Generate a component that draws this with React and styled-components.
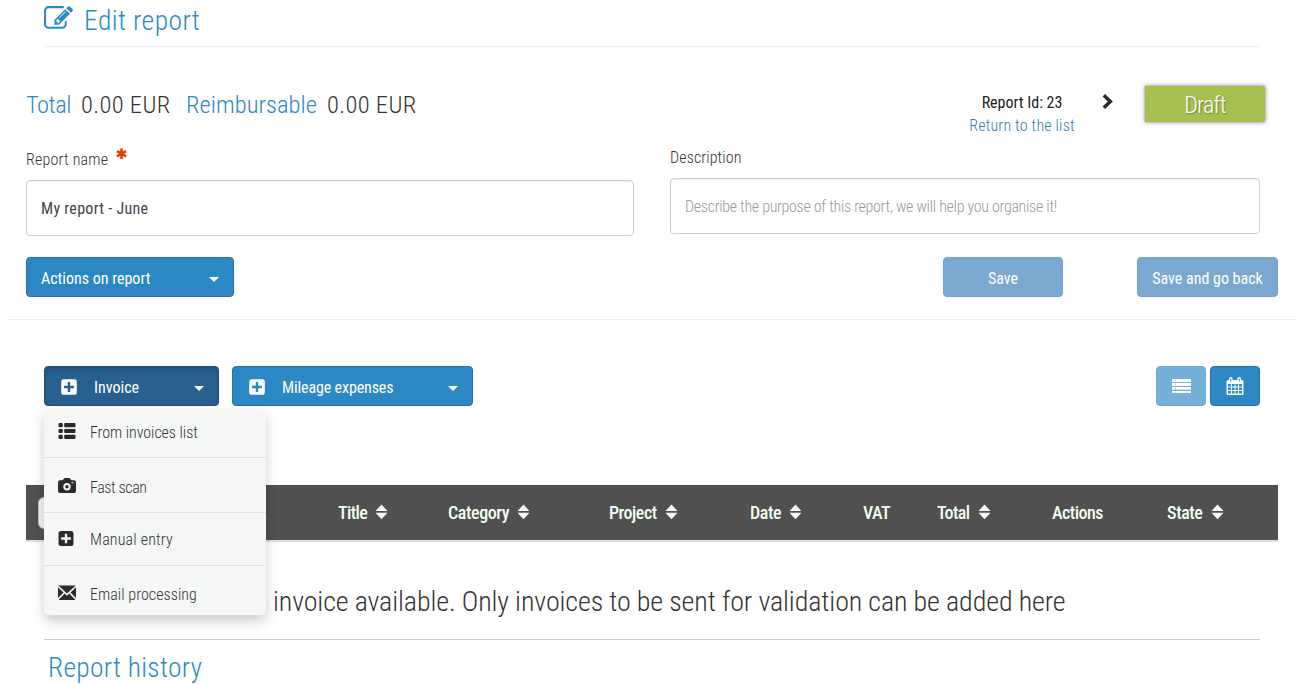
import React from 'react';
import styled, { createGlobalStyle, css } from 'styled-components';

const GlobalStyle = createGlobalStyle`
  * {
    box-sizing: border-box;
  }

  body {
    margin: 0;
    background: #fff;
    color: #333;
    font-family: Roboto, "Liberation Sans", sans-serif;
    font-stretch: 75%;
    font-weight: 300;
    font-size: 16px;
    overflow: hidden;
  }
`;

const Page = styled.div`
  width: 1299px;
  height: 684px;
  overflow: hidden;
`;

const PageHeader = styled.header`
  display: flex;
  align-items: flex-start;
  gap: 11px;
  height: 47px;
  margin: 0 39px 0 44px;
  padding-top: 5px;
  border-bottom: 1px solid #eee;
  color: #2b88c4;
`;

const Title = styled.h1`
  margin: 0;
  font-size: 27.5px;
  font-weight: 300;
  line-height: 32px;
  letter-spacing: ${(props) => props.$spacing || 0}px;
`;

const Summary = styled.section`
  display: flex;
  align-items: flex-start;
  height: 101px;
  padding: 38px 34px 0 26px;
`;

const Totals = styled.div`
  display: flex;
  flex: 1;
  padding-top: 5px;
  font-size: 24.5px;
  line-height: 30px;
  white-space: nowrap;
`;

const TotalLabel = styled.span`
  width: ${(props) => props.$width}px;
  color: #2b88c4;
  letter-spacing: ${(props) => props.$spacing}px;
`;

const TotalValue = styled.span`
  width: 105px;
  letter-spacing: 0.35px;
`;

const ReportRef = styled.div`
  width: 106px;
  padding-top: 6px;
  text-align: center;
  line-height: 23px;
  white-space: nowrap;
`;

const ReportId = styled.div`
  font-weight: 400;
  color: #222;
  letter-spacing: 0;
`;

const ReturnLink = styled.a`
  color: #337ab7;
  letter-spacing: 0.18px;
`;

const Arrow = styled.svg`
  margin: 9px 32px 0 27px;
`;

const Status = styled.div`
  width: 120px;
  height: 36px;
  margin-top: 1px;
  background: #a6c04f;
  box-shadow: 0 0 4px rgba(0, 0, 0, 0.55);
  color: #fff;
  font-size: 24px;
  line-height: 39px;
  letter-spacing: -0.9px;
  text-align: center;
  text-shadow: 1px 1px 2px rgba(0, 0, 0, 0.35);
`;

const Form = styled.section`
  display: flex;
  align-items: flex-start;
  height: 109px;
  padding: 0 39px 0 26px;
  gap: 36px;
`;

const Field = styled.label`
  display: block;
  width: ${(props) => props.$width}px;
  margin-top: ${(props) => props.$top}px;
`;

const FieldLabel = styled.span`
  display: flex;
  gap: 8px;
  height: 32px;
  line-height: 24px;
  letter-spacing: ${(props) => props.$spacing}px;
`;

const Input = styled.input`
  display: block;
  width: 100%;
  height: 56px;
  padding: 0 14px;
  border: 1px solid #ccc;
  border-radius: 4px;
  box-shadow: inset 0 1px 1px rgba(0, 0, 0, 0.075);
  color: #444;
  font: inherit;
  font-weight: 400;
  letter-spacing: ${(props) => props.$spacing}px;
  outline: none;

  &::placeholder {
    color: #999;
    font-weight: 300;
    opacity: 1;
  }
`;

const FormActions = styled.div`
  display: flex;
  align-items: flex-start;
  height: 63px;
  margin: 0 3px 0 8px;
  padding: 0 18px;
  border-bottom: 1px solid #eee;
`;

const Button = styled.button`
  display: flex;
  align-items: center;
  justify-content: ${(props) => (props.$center ? 'center' : 'flex-start')};
  flex: none;
  width: ${(props) => props.$width}px;
  height: 40px;
  padding: 2px 14px 0;
  border: 1px solid #2a6fa8;
  border-radius: 4px;
  background: #2b88c4;
  color: #fff;
  font: inherit;
  font-weight: 400;
  letter-spacing: ${(props) => props.$spacing || 0}px;
  white-space: nowrap;

  ${(props) =>
    props.$faded &&
    css`
      background: #7ba8d0;
      border-color: #75a0c9;
    `}

  ${(props) =>
    props.$pressed &&
    css`
      background: #286090;
      border-color: #204d74;
      box-shadow: inset 0 3px 5px rgba(0, 0, 0, 0.125);
    `}
`;

const SaveGroup = styled.div`
  display: flex;
  gap: 74px;
  margin-left: auto;
`;

const ButtonIcon = styled.svg`
  margin: -1px 17px 0 2px;
`;

const Caret = styled.span`
  margin-left: auto;
  margin-top: 3px;
  border-top: 5px solid #fff;
  border-left: 5px solid transparent;
  border-right: 5px solid transparent;
`;

const Toolbar = styled.div`
  display: flex;
  gap: 13px;
  height: 165px;
  padding: 46px 39px 0 44px;
`;

const Dropdown = styled.div`
  position: relative;
  height: 40px;
`;

const Menu = styled.ul`
  position: absolute;
  top: 43px;
  left: 0;
  z-index: 2;
  width: 222px;
  margin: 0;
  padding: 0;
  list-style: none;
  background: #f5f7f7;
  border-radius: 5px;
  box-shadow: 0 6px 12px rgba(0, 0, 0, 0.2);
`;

const MenuItem = styled.li`
  display: flex;
  align-items: flex-start;
  height: ${(props) => props.$height}px;
  padding: ${(props) => props.$top}px 14px 0;
  border-bottom: 1px solid #e0e3e3;
  line-height: 22px;
  letter-spacing: ${(props) => props.$spacing}px;

  &:last-child {
    border-bottom: 0;
  }

  svg {
    width: 18px;
    height: 18px;
    margin-right: 14px;
    fill: #2b2b2b;
  }
`;

const ViewSwitch = styled.div`
  display: flex;
  gap: 4px;
  margin-left: auto;
`;

const ViewButton = styled.button`
  display: flex;
  align-items: center;
  justify-content: center;
  width: 50px;
  height: 40px;
  padding: 0;
  border: 1px solid ${(props) => (props.$dim ? '#78a5cb' : '#2a6fa8')};
  border-radius: 4px;
  background: ${(props) => (props.$dim ? '#75b0d8' : '#2b88c4')};
`;

const TableHead = styled.div`
  display: grid;
  grid-template-columns: 312px 110px 161px 141px 113px 74px 115px 115px 1fr;
  align-items: center;
  height: 57px;
  margin: 0 21px 0 26px;
  border-bottom: 2px solid #ddd;
  background: #505050;
  color: #f0fff0;
  font-size: 18px;
  font-weight: 500;
`;

const Column = styled.span`
  display: flex;
  align-items: center;
  gap: 8px;
  letter-spacing: ${(props) => props.$spacing}px;

  svg {
    margin-top: -1px;
  }
`;

const Checkbox = styled.span`
  width: 32px;
  height: 32px;
  margin-left: 12px;
  border: 1px solid #bbb;
  border-radius: 6px;
  background: #f5f5f5;
`;

const EmptyMessage = styled.p`
  height: 98px;
  margin: 0 39px 0 44px;
  padding: 42px 0 0 192px;
  border-bottom: 1px solid #c8c8c8;
  font-size: 28px;
  line-height: 36px;
  white-space: nowrap;
  letter-spacing: -0.11px;
`;

const History = styled.section`
  padding: 12px 48px 0;
  color: #2b88c4;
`;

const HeaderIcon = styled.svg`
  margin-top: -1px;
`;

const EditIcon = () => (
  <HeaderIcon width="29" height="29" viewBox="0 0 1792 1792" fill="currentColor">
    <path d="M888 1184l116-116-152-152-116 116v56h96v96h56zm440-720q-16-16-33 1l-350 350q-17 17-1 33t33-1l350-350q17-17 1-33zm80 594v190q0 119-84.5 203.5t-203.5 84.5h-832q-119 0-203.5-84.5t-84.5-203.5v-832q0-119 84.5-203.5t203.5-84.5h832q63 0 117 25 15 7 18 23 3 17-9 29l-49 49q-14 14-32 8-23-6-45-6h-832q-66 0-113 47t-47 113v832q0 66 47 113t113 47h832q66 0 113-47t47-113v-126q0-13 9-22l64-64q15-15 35-7t20 29zm-96-738l288 288-672 672h-288v-288zm444 132l-92 92-288-288 92-92q28-28 68-28t68 28l152 152q28 28 28 68t-28 68z" />
  </HeaderIcon>
);

const plusPath =
  'M3 0.500h10a2.500 2.500 0 0 1 2.500 2.500v10a2.500 2.500 0 0 1-2.500 2.500h-10a2.500 2.500 0 0 1-2.500-2.500v-10a2.500 2.500 0 0 1 2.500-2.500zM6.800 3.200v3.600h-3.600v2.400h3.600v3.600h2.400v-3.600h3.600v-2.400h-3.600v-3.600z';

const PlusIcon = () => (
  <ButtonIcon width="16" height="16" viewBox="0.300 0.300 15.400 15.400" fill="#fff">
    <path fillRule="evenodd" d={plusPath} />
  </ButtonIcon>
);

const SortIcon = () => (
  <svg width="13" height="16" viewBox="0 0 13 16" fill="#f0fff0">
    <path d="M6.500 0.500L12.500 7H0.500zM0.500 8.700H12.500L6.500 15.200z" />
  </svg>
);

const Asterisk = () => (
  <svg width="11" height="12" viewBox="0 0 11 12" stroke="#e63c00" strokeWidth="2.600">
    <path d="M5.500 0.500v10.500M0.900 3.100l9.200 5.300M0.900 8.400l9.200-5.300" />
  </svg>
);

const ListIcon = () => (
  <svg viewBox="0 0 18 18">
    <rect x="0.500" y="1" width="4.300" height="4.300" rx="1" />
    <rect x="6.200" y="1" width="11.300" height="4.300" rx="1" />
    <rect x="0.500" y="6.900" width="4.300" height="4.200" rx="1" />
    <rect x="6.200" y="6.900" width="11.300" height="4.200" rx="1" />
    <rect x="0.500" y="12.700" width="4.300" height="4.300" rx="1" />
    <rect x="6.200" y="12.700" width="11.300" height="4.300" rx="1" />
  </svg>
);

const CameraIcon = () => (
  <svg viewBox="0 0 18 18">
    <path
      fillRule="evenodd"
      d="M6.500 1h5l2 2.300h2.500a2 2 0 0 1 2 2v8.700a2 2 0 0 1-2 2h-14a2 2 0 0 1-2-2v-8.700a2 2 0 0 1 2-2h2.500zM9 6a3.700 3.700 0 1 0 0 7.400a3.700 3.700 0 0 0 0-7.400zM9 8a1.700 1.700 0 1 1 0 3.400a1.700 1.700 0 0 1 0-3.400zM13.500 5.300h2v1h-2z"
    />
  </svg>
);

const SquarePlusIcon = () => (
  <svg viewBox="0 0 18 18">
    <path fillRule="evenodd" transform="translate(0 1.500)" d={plusPath} />
  </svg>
);

const MailIcon = () => (
  <svg viewBox="0 0 18 18">
    <path d="M0.300 1.500h17.400L9 9.500zM0 3.300L5.500 8.500 0 14zM18 3.300L12.500 8.500 18 14zM6.700 9.600L9 11.700l2.300-2.100L17.500 16H0.500z" />
  </svg>
);

const LinesIcon = () => (
  <svg width="19" height="15" viewBox="0 0 19 15" fill="#fff">
    <path d="M0 0h3v3H0zM4 0h15v3H4zM0 4h3v3H0zM4 4h15v3H4zM0 8h3v2H0zM4 8h15v2H4zM0 12h3v2H0zM4 12h15v2H4z" />
    <path opacity="0.700" d="M0 10h3v1H0zM4 10h15v1H4zM3 0h1v3H3zM3 4h1v3H3zM3 8h1v2H3zM3 12h1v2H3z" />
  </svg>
);

const CalendarIcon = () => (
  <svg width="18" height="18" viewBox="0 0 18 18">
    <rect x="0.500" y="3" width="17" height="15" rx="1.500" fill="#fff" />
    <rect x="3" y="0" width="3.600" height="5" rx="1.800" fill="#fff" />
    <rect x="11.400" y="0" width="3.600" height="5" rx="1.800" fill="#fff" />
    <path
      stroke="#2b88c4"
      d="M4.800 1.500v3M13.200 1.500v3"
    />
    <path
      fill="#2b88c4"
      d="M2 7h3v2.500H2zM6 7h2.500v2.500H6zM9.500 7H12v2.500H9.500zM13 7h3v2.500h-3zM2 10.500h3v2.500H2zM6 10.500h2.500v2.500H6zM9.500 10.500H12v2.500H9.500zM13 10.500h3v2.500h-3zM2 14h3v2.500H2zM6 14h2.500v2.500H6zM9.500 14H12v2.500H9.500zM13 14h3v2.500h-3z"
    />
  </svg>
);

const menuItems = [
  { label: 'From invoices list', icon: ListIcon, height: 49, top: 13, spacing: -0.06 },
  { label: 'Fast scan', icon: CameraIcon, height: 55, top: 19, spacing: -0.4 },
  { label: 'Manual entry', icon: SquarePlusIcon, height: 53, top: 16, spacing: 0.17 },
  { label: 'Email processing', icon: MailIcon, height: 49, top: 18, spacing: 0.05 },
];

const columns = [
  { label: 'Title', sortable: true, spacing: -0.6 },
  { label: 'Category', sortable: true, spacing: -0.4 },
  { label: 'Project', sortable: true, spacing: -0.5 },
  { label: 'Date', sortable: true, spacing: -0.4 },
  { label: 'VAT', spacing: -0.6 },
  { label: 'Total', sortable: true, spacing: -0.6 },
  { label: 'Actions', spacing: -0.55 },
  { label: 'State', sortable: true, spacing: -0.4 },
];

const App = () => {
  return (
    <Page>
      <GlobalStyle />
      <PageHeader>
        <EditIcon />
        <Title $spacing={0.45}>Edit report</Title>
      </PageHeader>

      <Summary>
        <Totals>
          <TotalLabel $width={55} $spacing={-0.5}>Total</TotalLabel>
          <TotalValue>0.00 EUR</TotalValue>
          <TotalLabel $width={141} $spacing={0.05}>Reimbursable</TotalLabel>
          <TotalValue>0.00 EUR</TotalValue>
        </Totals>
        <ReportRef>
          <ReportId>Report Id: 23</ReportId>
          <ReturnLink>Return to the list</ReturnLink>
        </ReportRef>
        <Arrow width="11" height="15" viewBox="0 0 11 15" fill="none" stroke="#2b2b2b" strokeWidth="3.600">
          <path d="M1.800 1.300L8.300 7.500l-6.500 6.200" />
        </Arrow>
        <Status>Draft</Status>
      </Summary>

      <Form>
        <Field $width={608} $top={0}>
          <FieldLabel $spacing={0.2}>
            Report name <Asterisk />
          </FieldLabel>
          <Input defaultValue="My report - June" $spacing={0.3} />
        </Field>
        <Field $width={590} $top={-2}>
          <FieldLabel $spacing={0.1}>Description</FieldLabel>
          <Input placeholder="Describe the purpose of this report, we will help you organise it!" $spacing={-0.3} />
        </Field>
      </Form>

      <FormActions>
        <Button $width={208}>
          Actions on report
          <Caret />
        </Button>
        <SaveGroup>
          <Button $width={120} $center $faded>Save</Button>
          <Button $width={141} $center $faded>Save and go back</Button>
        </SaveGroup>
      </FormActions>

      <Toolbar>
        <Dropdown>
          <Button $width={175} $pressed>
            <PlusIcon />
            Invoice
            <Caret />
          </Button>
          <Menu>
            {menuItems.map(({ label, icon: Icon, height, top, spacing }) => (
              <MenuItem key={label} $height={height} $top={top} $spacing={spacing}>
                <Icon />
                {label}
              </MenuItem>
            ))}
          </Menu>
        </Dropdown>
        <Button $width={241} $spacing={-0.13}>
          <PlusIcon />
          Mileage expenses
          <Caret />
        </Button>
        <ViewSwitch>
          <ViewButton $dim>
            <LinesIcon />
          </ViewButton>
          <ViewButton>
            <CalendarIcon />
          </ViewButton>
        </ViewSwitch>
      </Toolbar>

      <TableHead>
        <Checkbox />
        {columns.map(({ label, sortable, spacing }) => (
          <Column key={label} $spacing={spacing}>
            {label}
            {sortable && <SortIcon />}
          </Column>
        ))}
      </TableHead>
      <EmptyMessage>
        No invoice available. Only invoices to be sent for validation can be added here
      </EmptyMessage>

      <History>
        <Title as="h2" $spacing={0.28}>Report history</Title>
      </History>
    </Page>
  );
};

export default App;
